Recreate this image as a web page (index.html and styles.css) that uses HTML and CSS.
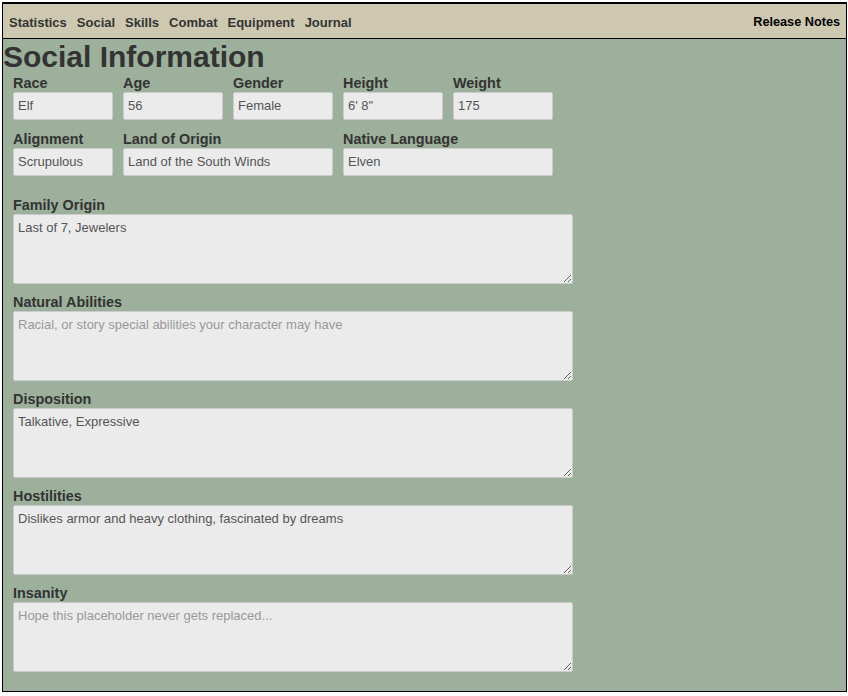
FILE: index.html
```html
<!DOCTYPE html>
<html>
<head>
<meta charset="utf-8">
<title>Social Information</title>
<link rel="stylesheet" href="styles.css">
</head>
<body>
<div class="frame">
  <nav class="nav">
    <div class="nav-links">
      <a class="nav-link">Statistics</a>
      <a class="nav-link">Social</a>
      <a class="nav-link">Skills</a>
      <a class="nav-link">Combat</a>
      <a class="nav-link">Equipment</a>
      <a class="nav-link">Journal</a>
    </div>
    <a class="nav-link release">Release Notes</a>
  </nav>
  <main class="content">
    <h1 class="title">Social Information</h1>
    <div class="row">
      <div class="field"><label>Race</label><input class="short" value="Elf"></div>
      <div class="field"><label>Age</label><input class="short" value="56"></div>
      <div class="field"><label>Gender</label><input class="short" value="Female"></div>
      <div class="field"><label>Height</label><input class="short" value="6' 8&quot;"></div>
      <div class="field"><label>Weight</label><input class="short" value="175"></div>
    </div>
    <div class="row">
      <div class="field"><label>Alignment</label><input class="short" value="Scrupulous"></div>
      <div class="field"><label>Land of Origin</label><input class="long" value="Land of the South Winds"></div>
      <div class="field"><label>Native Language</label><input class="long" value="Elven"></div>
    </div>
    <div class="areas">
      <div class="field"><label>Family Origin</label><textarea>Last of 7, Jewelers</textarea></div>
      <div class="field"><label>Natural Abilities</label><textarea placeholder="Racial, or story special abilities your character may have"></textarea></div>
      <div class="field"><label>Disposition</label><textarea>Talkative, Expressive</textarea></div>
      <div class="field"><label>Hostilities</label><textarea>Dislikes armor and heavy clothing, fascinated by dreams</textarea></div>
      <div class="field"><label>Insanity</label><textarea placeholder="Hope this placeholder never gets replaced..."></textarea></div>
    </div>
  </main>
</div>
</body>
</html>
```
FILE: styles.css
```css
html, body {
  margin: 0;
  padding: 0;
  background: #ffffff;
}
body {
  font-family: "Liberation Sans", Arial, sans-serif;
  color: #333333;
}
.frame {
  margin: 2px 1px 0 2px;
  border: 1px solid #000000;
  border-top-width: 2px;
  background: #9cb09b;
  padding-bottom: 19px;
}
.nav {
  display: flex;
  justify-content: space-between;
  align-items: center;
  box-sizing: border-box;
  height: 35px;
  padding: 2px 6px 0 6px;
  background: #cec8b1;
  border-bottom: 1px solid #000000;
  font-size: 13px;
  font-weight: bold;
}
.nav-links {
  display: flex;
  gap: 10px;
}
.nav-link {
  color: #333333;
  text-decoration: none;
}
.release {
  color: #000000;
  font-size: 12.7px;
}
.title {
  margin: 0 0 1px 0;
  font-size: 30px;
  line-height: 35px;
  font-weight: bold;
  color: #333333;
}
.row {
  display: flex;
  gap: 10px;
  padding-left: 10px;
  margin-bottom: 11px;
}
.row + .row {
  margin-bottom: 21px;
}
.field {
  display: flex;
  flex-direction: column;
}
label {
  font-size: 14.4px;
  line-height: 16px;
  padding-bottom: 1px;
  font-weight: bold;
  color: #333333;
}
input, textarea {
  box-sizing: border-box;
  margin: 0;
  font-family: "Liberation Sans", Arial, sans-serif;
  font-size: 13px;
  color: #555555;
  background: #ebebeb;
  border: 1px solid #cccccc;
  border-radius: 2px;
  outline: none;
}
input {
  height: 28px;
  padding: 0 4px 1px 4px;
}
input.short {
  width: 100px;
}
input.long {
  width: 210px;
}
.areas {
  display: flex;
  flex-direction: column;
  gap: 10px;
  padding-left: 10px;
}
textarea {
  width: 560px;
  height: 70px;
  padding: 5px 4px 4px 4px;
  line-height: 15px;
  resize: vertical;
}
textarea::placeholder {
  color: #999999;
}
```
